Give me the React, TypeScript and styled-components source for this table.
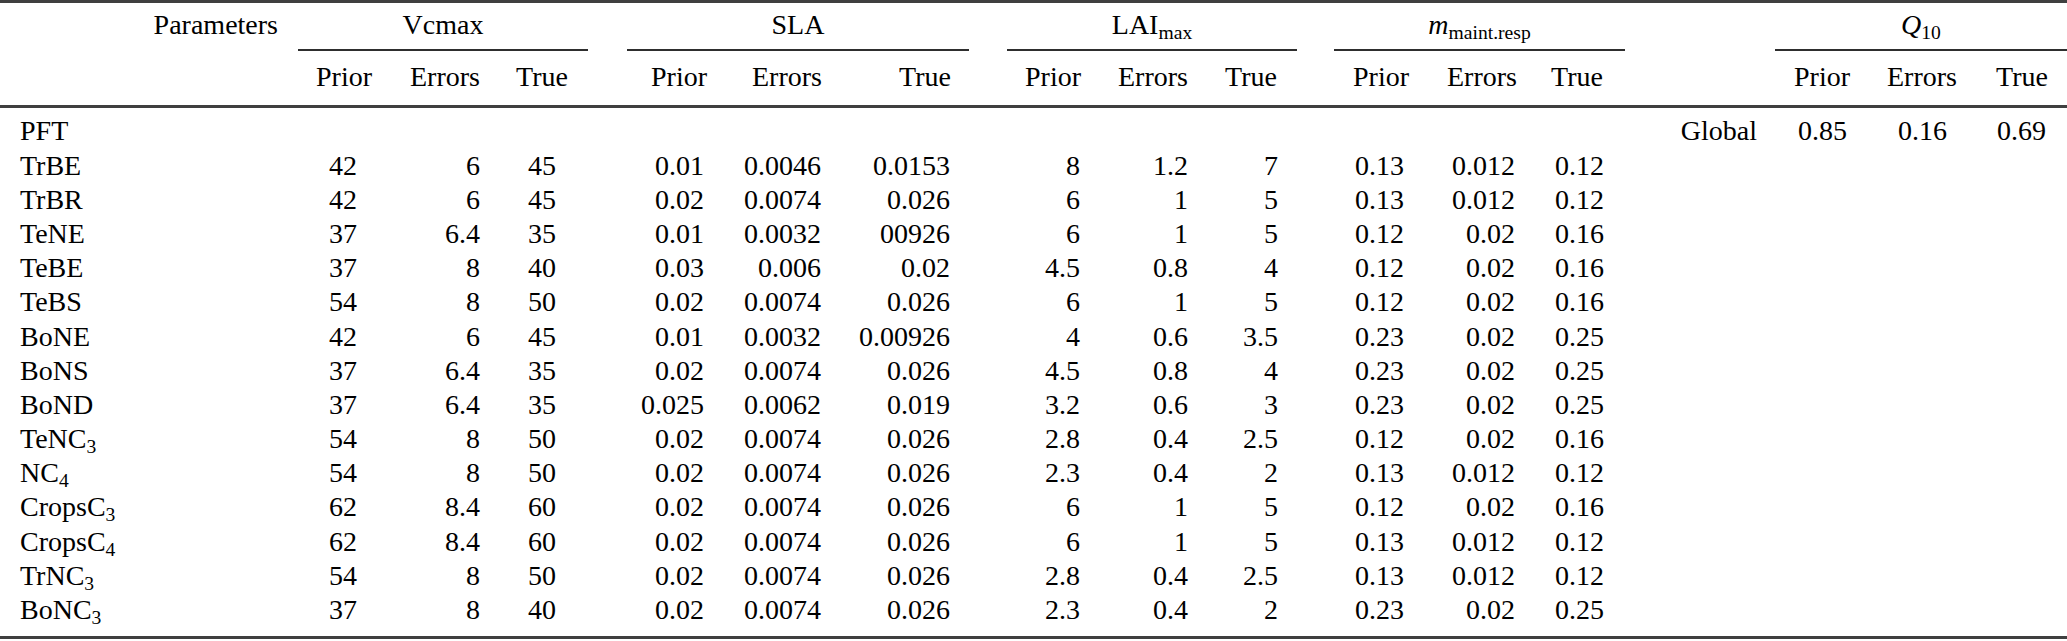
import React from 'react';
import styled, { createGlobalStyle } from 'styled-components';

const GlobalStyle = createGlobalStyle`
  html, body {
    margin: 0;
    padding: 0;
    background: #fff;
  }
  body {
    font-family: 'Liberation Serif', 'Times New Roman', serif;
    color: #000;
  }
`;

type Col = { w: number; kind: 'label' | 'data' | 'gap' | 'global'; hc?: number; vr?: number };

// column widths follow the reference, hc = header centre, vr = right edge of the numbers
const COLS: Col[] = [
  { w: 298, kind: 'label' },
  { w: 97, kind: 'data', hc: 344, vr: 357 },
  { w: 98, kind: 'data', hc: 445, vr: 480 },
  { w: 95, kind: 'data', hc: 542, vr: 556 },
  { w: 39, kind: 'gap' },
  { w: 106, kind: 'data', hc: 679, vr: 704 },
  { w: 123, kind: 'data', hc: 787, vr: 821 },
  { w: 113, kind: 'data', hc: 925, vr: 950 },
  { w: 38, kind: 'gap' },
  { w: 96, kind: 'data', hc: 1053, vr: 1080 },
  { w: 98, kind: 'data', hc: 1153, vr: 1188 },
  { w: 96, kind: 'data', hc: 1251, vr: 1278 },
  { w: 37, kind: 'gap' },
  { w: 97, kind: 'data', hc: 1381, vr: 1404 },
  { w: 97, kind: 'data', hc: 1482, vr: 1515 },
  { w: 97, kind: 'data', hc: 1577, vr: 1604 },
  { w: 150, kind: 'global', vr: 1757 },
  { w: 97, kind: 'data', hc: 1822, vr: 1847 },
  { w: 100, kind: 'data', hc: 1922, vr: 1947 },
  { w: 95, kind: 'data', hc: 2022, vr: 2046 },
];

const LEFTS: number[] = [];
COLS.reduce((x, c) => {
  LEFTS.push(x);
  return x + c.w;
}, 0);

const TEMPLATE = COLS.map((c) => `${c.w}px`).join(' ');

// grid lines covered by each parameter group
const SPANS = [
  [2, 5],
  [6, 9],
  [10, 13],
  [14, 17],
  [18, 21],
];

type Label = [string, string?];

const ROWS: { label: Label; values: string[] }[] = [
  { label: ['TrBE'], values: ['42', '6', '45', '0.01', '0.0046', '0.0153', '8', '1.2', '7', '0.13', '0.012', '0.12'] },
  { label: ['TrBR'], values: ['42', '6', '45', '0.02', '0.0074', '0.026', '6', '1', '5', '0.13', '0.012', '0.12'] },
  { label: ['TeNE'], values: ['37', '6.4', '35', '0.01', '0.0032', '00926', '6', '1', '5', '0.12', '0.02', '0.16'] },
  { label: ['TeBE'], values: ['37', '8', '40', '0.03', '0.006', '0.02', '4.5', '0.8', '4', '0.12', '0.02', '0.16'] },
  { label: ['TeBS'], values: ['54', '8', '50', '0.02', '0.0074', '0.026', '6', '1', '5', '0.12', '0.02', '0.16'] },
  { label: ['BoNE'], values: ['42', '6', '45', '0.01', '0.0032', '0.00926', '4', '0.6', '3.5', '0.23', '0.02', '0.25'] },
  { label: ['BoNS'], values: ['37', '6.4', '35', '0.02', '0.0074', '0.026', '4.5', '0.8', '4', '0.23', '0.02', '0.25'] },
  { label: ['BoND'], values: ['37', '6.4', '35', '0.025', '0.0062', '0.019', '3.2', '0.6', '3', '0.23', '0.02', '0.25'] },
  { label: ['TeNC', '3'], values: ['54', '8', '50', '0.02', '0.0074', '0.026', '2.8', '0.4', '2.5', '0.12', '0.02', '0.16'] },
  { label: ['NC', '4'], values: ['54', '8', '50', '0.02', '0.0074', '0.026', '2.3', '0.4', '2', '0.13', '0.012', '0.12'] },
  { label: ['CropsC', '3'], values: ['62', '8.4', '60', '0.02', '0.0074', '0.026', '6', '1', '5', '0.12', '0.02', '0.16'] },
  { label: ['CropsC', '4'], values: ['62', '8.4', '60', '0.02', '0.0074', '0.026', '6', '1', '5', '0.13', '0.012', '0.12'] },
  { label: ['TrNC', '3'], values: ['54', '8', '50', '0.02', '0.0074', '0.026', '2.8', '0.4', '2.5', '0.13', '0.012', '0.12'] },
  { label: ['BoNC', '3'], values: ['37', '8', '40', '0.02', '0.0074', '0.026', '2.3', '0.4', '2', '0.23', '0.02', '0.25'] },
];

const Page = styled.div`
  width: 2067px;
  font-size: 28px;
`;

const Rule = styled.div<{ $top: number }>`
  height: 3px;
  margin-top: ${(p) => p.$top}px;
  background: #3f3f3f;
`;

const Grid = styled.div<{ $top?: number }>`
  display: grid;
  grid-template-columns: ${TEMPLATE};
  height: 34.2px;
  line-height: 34.2px;
  margin-top: ${(p) => p.$top ?? 0}px;
  white-space: nowrap;
`;

const Body = styled.div`
  margin-top: 6px;
`;

const CmidGrid = styled.div`
  display: grid;
  grid-template-columns: ${TEMPLATE};
  height: 2px;
  margin-top: 7px;
`;

const Cmid = styled.div<{ $from: number; $to: number }>`
  grid-column: ${(p) => p.$from} / ${(p) => p.$to};
  background: #2e2e2e;
`;

const GroupHead = styled.div<{ $from: number; $to: number }>`
  grid-column: ${(p) => p.$from} / ${(p) => p.$to};
  text-align: center;
`;

const ParamHead = styled.div`
  grid-column: 1 / 2;
  text-align: right;
  padding-right: 20px;
`;

const HeadCell = styled.div<{ $shift: number }>`
  text-align: center;
  padding-left: ${(p) => Math.max(0, p.$shift * 2)}px;
  padding-right: ${(p) => Math.max(0, -p.$shift * 2)}px;
`;

const LabelCell = styled.div`
  padding-left: 20px;
`;

const ValueCell = styled.div<{ $pr: number }>`
  text-align: right;
  padding-right: ${(p) => p.$pr}px;
`;

const Sub = styled.sub`
  font-size: 0.7em;
  vertical-align: -0.24em;
  line-height: 0;
`;

const Ital = styled.i`
  font-style: italic;
`;

const Empty = styled.div``;

function headShift(i: number) {
  const c = COLS[i];
  return (c.hc ?? 0) - (LEFTS[i] + c.w / 2);
}

function rightPad(i: number) {
  const c = COLS[i];
  return LEFTS[i] + c.w - (c.vr ?? LEFTS[i] + c.w);
}

function DataRow({ label, values, extra }: { label: Label; values: string[]; extra?: string[] }) {
  let k = 0;
  let q = 0;
  return (
    <Grid>
      {COLS.map((c, i) => {
        if (c.kind === 'label')
          return (
            <LabelCell key={i}>
              {label[0]}
              {label[1] && <Sub>{label[1]}</Sub>}
            </LabelCell>
          );
        if (c.kind === 'gap') return <Empty key={i} />;
        if (c.kind === 'global')
          return (
            <ValueCell key={i} $pr={rightPad(i)}>
              {extra ? extra[0] : ''}
            </ValueCell>
          );
        let v = '';
        if (k < 12) {
          v = values[k] ?? '';
          k++;
        } else {
          v = extra ? extra[1 + q] : '';
          q++;
        }
        return (
          <ValueCell key={i} $pr={rightPad(i)}>
            {v}
          </ValueCell>
        );
      })}
    </Grid>
  );
}

export default function App() {
  const titles: React.ReactNode[] = [
    'Vcmax',
    'SLA',
    <>
      LAI<Sub>max</Sub>
    </>,
    <>
      <Ital>m</Ital>
      <Sub>maint.resp</Sub>
    </>,
    <>
      <Ital>Q</Ital>
      <Sub>10</Sub>
    </>,
  ];

  let dataIndex = 0;

  return (
    <Page>
      <GlobalStyle />
      <Rule $top={0} />
      <Grid $top={5}>
        <ParamHead>Parameters</ParamHead>
        {SPANS.map(([from, to], i) => (
          <GroupHead key={from} $from={from} $to={to}>
            {titles[i]}
          </GroupHead>
        ))}
      </Grid>
      <CmidGrid>
        {SPANS.map(([from, to]) => (
          <Cmid key={from} $from={from} $to={to} />
        ))}
      </CmidGrid>
      <Grid $top={9}>
        {COLS.map((c, i) => {
          if (c.kind !== 'data') return <Empty key={i} />;
          const name = ['Prior', 'Errors', 'True'][dataIndex % 3];
          dataIndex++;
          return (
            <HeadCell key={i} $shift={headShift(i)}>
              {name}
            </HeadCell>
          );
        })}
      </Grid>
      <Rule $top={11} />
      <Body>
        <DataRow label={['PFT']} values={[]} extra={['Global', '0.85', '0.16', '0.69']} />
        {ROWS.map((r) => (
          <DataRow key={r.label.join('')} label={r.label} values={r.values} />
        ))}
      </Body>
      <Rule $top={9} />
    </Page>
  );
}
